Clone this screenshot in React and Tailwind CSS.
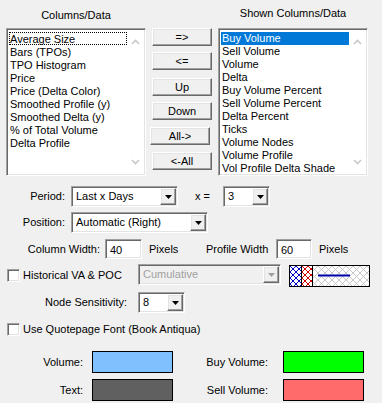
import React from "react";

const sunken =
  "border border-t-[#a0a0a0] border-l-[#a0a0a0] border-r-white border-b-white";
const sunkenInner =
  "shadow-[inset_1px_1px_0_#696969,inset_-1px_-1px_0_#e3e3e3]";
const raised =
  "border border-t-white border-l-white border-r-[#696969] border-b-[#696969] shadow-[inset_-1px_-1px_0_#a0a0a0,inset_1px_1px_0_#e3e3e3] bg-[#f0f0f0]";

function Tri({ color = "#000" }) {
  return (
    <svg width="7" height="4" viewBox="0 0 7 4">
      <path d="M0 0H7L3.5 4Z" fill={color} />
    </svg>
  );
}

function Combo({ className, value, disabled }) {
  return (
    <div className={`${sunken} h-[21px] flex ${className}`}>
      <div
        className={`${sunkenInner} flex-1 flex p-[1px] ${
          disabled ? "bg-[#f0f0f0]" : "bg-white"
        }`}
      >
        <span
          className={`flex-1 pl-[3px] leading-[17px] ${
            disabled ? "text-[#a0a0a0]" : "text-black"
          }`}
        >
          {value}
        </span>
        <div className={`${raised} w-[16px] h-[17px] flex items-center justify-center`}>
          <Tri color={disabled ? "#a0a0a0" : "#000"} />
        </div>
      </div>
    </div>
  );
}

function TextBox({ className, value }) {
  return (
    <div className={`${sunken} h-[20px] flex ${className}`}>
      <div className={`${sunkenInner} flex-1 bg-white pl-[4px] pt-[3px] leading-[14px]`}>
        {value}
      </div>
    </div>
  );
}

function Check() {
  return (
    <div className={`${sunken} w-[13px] h-[13px] flex`}>
      <div className={`${sunkenInner} flex-1 bg-white`} />
    </div>
  );
}

function Btn({ children, className = "" }) {
  return (
    <div
      className={`${raised} h-[18px] w-[60px] flex items-center justify-center leading-[13px] ${className}`}
    >
      {children}
    </div>
  );
}

function ScrollArrows() {
  return (
    <div className="w-[17px] flex flex-col justify-between items-center py-[9px]">
      <svg width="9" height="6" viewBox="0 0 9 6">
        <path d="M1 5L4.5 1.5L8 5" stroke="#c8c8c8" strokeWidth="1.6" fill="none" />
      </svg>
      <svg width="9" height="6" viewBox="0 0 9 6">
        <path d="M1 1L4.5 4.5L8 1" stroke="#c8c8c8" strokeWidth="1.6" fill="none" />
      </svg>
    </div>
  );
}

function PatternSwatch() {
  return (
    <svg width="81" height="22" viewBox="0 0 81 22" className="block">
      <defs>
        <pattern id="pb" width="6" height="6" patternUnits="userSpaceOnUse" x="1" y="1">
          <path d="M0 0L6 6M6 0L0 6" stroke="#0000c8" strokeWidth="1" />
        </pattern>
        <pattern id="pr" width="6" height="6" patternUnits="userSpaceOnUse" x="1" y="1">
          <path d="M0 0L6 6M6 0L0 6" stroke="#d00000" strokeWidth="1" />
        </pattern>
        <pattern id="pg" width="7" height="7" patternUnits="userSpaceOnUse" x="1" y="1">
          <path d="M0 0L7 7M7 0L0 7" stroke="#c8c8c8" strokeWidth="1" />
        </pattern>
      </defs>
      <rect x="0" y="0" width="81" height="22" fill="#fff" />
      <rect x="1" y="1" width="11" height="20" fill="url(#pb)" />
      <rect x="13" y="1" width="10" height="20" fill="url(#pr)" />
      <rect x="24" y="1" width="56" height="20" fill="url(#pg)" />
      <path d="M12.5 0V22M23.5 0V22" stroke="#000" strokeWidth="1" />
      <path d="M29 10.5H61" stroke="#0000a8" strokeWidth="2" />
      <rect x="0.5" y="0.5" width="80" height="21" fill="none" stroke="#000" strokeWidth="1" />
    </svg>
  );
}

const leftItems = [
  "Average Size",
  "Bars (TPOs)",
  "TPO Histogram",
  "Price",
  "Price (Delta Color)",
  "Smoothed Profile (y)",
  "Smoothed Delta (y)",
  "% of Total Volume",
  "Delta Profile",
];

const rightItems = [
  "Buy Volume",
  "Sell Volume",
  "Volume",
  "Delta",
  "Buy Volume Percent",
  "Sell Volume Percent",
  "Delta Percent",
  "Ticks",
  "Volume Nodes",
  "Volume Profile",
  "Vol Profile Delta Shade",
];

export default function App() {
  return (
    <div
      className="w-[382px] h-[403px] bg-[#f0f0f0] text-black text-[11px] leading-[13px] overflow-hidden"
      style={{ fontFamily: '"Liberation Sans", Arial, sans-serif' }}
    >
      {/* Top section */}
      <div className="flex">
        <div className="ml-[6px] w-[140px] flex flex-col">
          <div className="h-[28px] pt-[9px] text-center">Columns/Data</div>
          <div className={`${sunken} h-[148px] flex`}>
            <div className={`${sunkenInner} flex-1 bg-white flex p-[1px]`}>
              <div className="flex-1 pt-[2px]">
                {leftItems.map((t, i) => (
                  <div
                    key={t}
                    className={`h-[13px] leading-[12px] ml-[1px] whitespace-nowrap ${
                      i === 0 ? "border border-dotted border-black" : "border border-transparent"
                    }`}
                  >
                    {t}
                  </div>
                ))}
              </div>
              <ScrollArrows />
            </div>
          </div>
        </div>

        <div className="ml-[6px] w-[60px] pt-[28px] flex flex-col">
          <Btn>=&gt;</Btn>
          <Btn className="mt-[6px]">&lt;=</Btn>
          <Btn className="mt-[8px]">Up</Btn>
          <Btn className="mt-[6px]">Down</Btn>
          <Btn className="mt-[7px] -ml-[2px]">All-&gt;</Btn>
          <Btn className="mt-[7px]">&lt;-All</Btn>
        </div>

        <div className="ml-[6px] w-[150px] flex flex-col">
          <div className="h-[28px] pt-[7px] text-center">Shown Columns/Data</div>
          <div className={`${sunken} h-[148px] flex`}>
            <div className={`${sunkenInner} flex-1 bg-white flex p-[1px]`}>
              <div className="flex-1 pt-[2px]">
                {rightItems.map((t, i) => (
                  <div
                    key={t}
                    className={`h-[13px] leading-[13px] ml-[1px] pl-[1px] whitespace-nowrap ${
                      i === 0 ? "bg-[#0078d7] text-white" : ""
                    }`}
                  >
                    {t}
                  </div>
                ))}
              </div>
              <ScrollArrows />
            </div>
          </div>
        </div>
      </div>

      {/* Period */}
      <div className="flex items-center h-[21px] mt-[10px]">
        <span className="w-[65px] text-right">Period:</span>
        <Combo className="ml-[6px] w-[107px]" value="Last x Days" />
        <span className="w-[45px] pl-[17px]">x =</span>
        <Combo className="w-[47px]" value="3" />
      </div>

      {/* Position */}
      <div className="flex items-center h-[21px] mt-[5px]">
        <span className="w-[65px] text-right">Position:</span>
        <Combo className="ml-[6px] w-[137px]" value="Automatic (Right)" />
      </div>

      {/* Widths */}
      <div className="flex items-center h-[20px] mt-[6px]">
        <span className="w-[100px] text-right">Column Width:</span>
        <TextBox className="ml-[5px] w-[37px]" value="40" />
        <span className="w-[64px] pl-[7px]">Pixels</span>
        <span className="w-[70px]">Profile Width</span>
        <TextBox className="w-[36px]" value="60" />
        <span className="pl-[7px]">Pixels</span>
      </div>

      {/* Historical */}
      <div className="flex items-start h-[23px] mt-[5px]">
        <div className="ml-[7px] mt-[5px]">
          <Check />
        </div>
        <span className="w-[118px] pl-[3px] mt-[5px]">Historical VA &amp; POC</span>
        <Combo className="w-[143px]" value="Cumulative" disabled />
        <div className="ml-[8px] mt-[1px]">
          <PatternSwatch />
        </div>
      </div>

      {/* Node Sensitivity */}
      <div className="flex items-center h-[21px] mt-[5px]">
        <span className="w-[127px] text-right">Node Sensitivity:</span>
        <Combo className="ml-[11px] w-[47px]" value="8" />
      </div>

      {/* Quotepage font */}
      <div className="flex items-center h-[14px] mt-[9px]">
        <div className="ml-[7px]">
          <Check />
        </div>
        <span className="pl-[3px]">Use Quotepage Font (Book Antiqua)</span>
      </div>

      {/* Colors */}
      <div className="flex items-center h-[22px] mt-[15px]">
        <span className="w-[83px] text-right">Volume:</span>
        <div className="ml-[9px] w-[81px] h-[22px] border border-black bg-[#80c0ff]" />
        <span className="w-[95px] text-right">Buy Volume:</span>
        <div className="ml-[15px] w-[81px] h-[22px] border border-black bg-[#00ff00]" />
      </div>
      <div className="flex items-center h-[22px] mt-[6px]">
        <span className="w-[83px] text-right">Text:</span>
        <div className="ml-[9px] w-[81px] h-[22px] border border-black bg-[#606060]" />
        <span className="w-[95px] text-right">Sell Volume:</span>
        <div className="ml-[15px] w-[81px] h-[22px] border border-black bg-[#ff6b6b]" />
      </div>
    </div>
  );
}
